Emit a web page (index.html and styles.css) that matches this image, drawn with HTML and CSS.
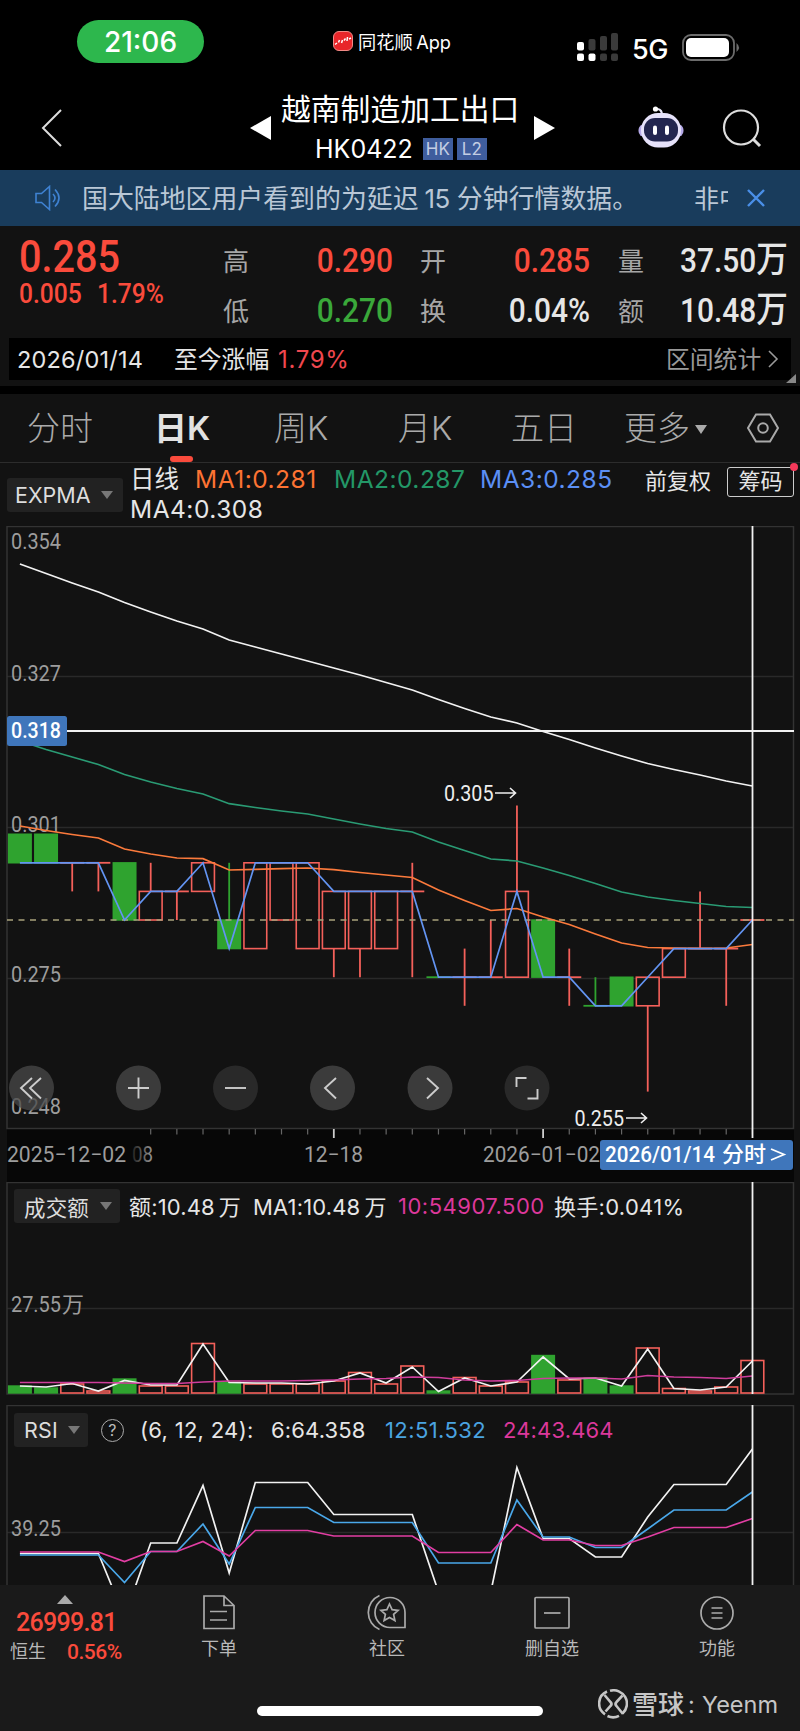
FILE: index.html
```html
<!DOCTYPE html>
<html lang="zh-CN">
<head>
    <meta charset="UTF-8">
    <meta name="viewport" content="width=device-width, initial-scale=1.0">
    <title>越南制造加工出口 HK0422</title>
    <link rel="stylesheet" href="styles.css">
</head>
<body>
    <div class="status-bar">
        <div class="time">21:06</div>
        <div class="app-tag">
            <svg width="20" height="20" viewBox="0 0 20 20">
                <rect x="0.5" y="0.5" width="19" height="19" rx="5.5" fill="#e8262a" stroke="#f08a86"/>
                <path d="M2 13.500l2-1.500M5.500 11.500l1-2.500M8.500 12l1-3M11 9.500l1.500-2M14 10l.5-4M16 8l2-1" stroke="#fff" stroke-width="1.500"/>
            </svg>
            <span class="app-name">同花顺 App</span>
        </div>
        <svg class="signal" width="42" height="30" viewBox="0 0 42 30">
            <g fill="#3a3a3a">
                <rect x="11.5" y="6" width="7" height="11.5" rx="2"/>
                <rect x="23" y="3" width="7" height="14.5" rx="2"/>
                <rect x="34" y="0" width="7" height="17.5" rx="2"/>
                <rect x="23" y="20.5" width="7" height="7.5" rx="2"/>
                <rect x="34" y="20.5" width="7" height="7.5" rx="2"/>
            </g>
            <rect x="0" y="9" width="7" height="8.5" rx="2" fill="#fff"/>
            <rect x="0" y="20.5" width="7" height="7.5" rx="2" fill="#fff"/>
            <rect x="11.5" y="20.5" width="7" height="7.5" rx="2" fill="#fff"/>
        </svg>
        <span class="network">5G</span>
        <svg class="battery" width="60" height="28" viewBox="0 0 60 28">
            <rect x="1" y="1" width="51" height="25" rx="8" fill="none" stroke="#6c6c6c" stroke-width="1.8"/>
            <rect x="4" y="4" width="43" height="19" rx="5" fill="#fff"/>
            <path d="M54.500 9q5 4.500 0 9z" fill="#6c6c6c"/>
        </svg>
    </div>

    <div class="header">
        <svg class="back" width="24" height="40" viewBox="0 0 24 40"><path d="M21 2L3 20l18 18" fill="none" stroke="#ddd" stroke-width="2"/></svg>
        <svg class="prev" width="22" height="24" viewBox="0 0 22 24"><path d="M0 12L21 0v24z" fill="#fff"/></svg>
        <div class="stock">
            <div class="stock-name">越南制造加工出口</div>
            <div class="stock-code">HK0422 <span class="badge">HK</span><span class="badge">L2</span></div>
        </div>
        <svg class="next" width="22" height="24" viewBox="0 0 22 24"><path d="M22 12L1 0v24z" fill="#fff"/></svg>
        <svg class="robot" width="46" height="42" viewBox="0 0 46 42">
            <path d="M24 9q0-5-4-6" fill="none" stroke="#e8e6f8" stroke-width="2.2"/>
            <circle cx="17.5" cy="3" r="2.6" fill="#fff"/>
            <rect x="0.5" y="18" width="45" height="13" rx="6" fill="#b5a9e8"/>
            <rect x="3" y="7" width="40" height="34.5" rx="17" fill="#e6e2fa"/>
            <rect x="6" y="12" width="34" height="23.5" rx="11" fill="#23264f"/>
            <rect x="15" y="19.5" width="4" height="9.5" rx="2" fill="#fff"/>
            <rect x="27" y="19.5" width="4" height="9.5" rx="2" fill="#fff"/>
        </svg>
        <svg class="search" width="42" height="40" viewBox="0 0 42 40"><circle cx="19" cy="18.5" r="17" fill="none" stroke="#ddd" stroke-width="2.2"/><path d="M31 30l7 7" stroke="#ddd" stroke-width="3"/></svg>
    </div>

    <div class="notice">
        <svg class="speaker" width="30" height="26" viewBox="0 0 30 26" fill="none" stroke="#3f82d2" stroke-width="1.6">
            <path d="M1 8.500v9h5.500l8 7v-23l-8 7z"/><path d="M18 9q4 4 0 8M20 4.500q8 8.500 0 17"/>
        </svg>
        <span class="notice-text">国大陆地区用户看到的为延迟<i>15</i>分钟行情数据。</span>
        <span class="notice-next">非中</span>
        <svg class="close" width="20" height="20" viewBox="0 0 20 20"><path d="M2 2l16 16M18 2L2 18" stroke="#4a8fe8" stroke-width="2.4"/></svg>
    </div>

    <div class="quote">
        <div class="price">
            <div class="last num">0.285</div>
            <div class="change"><span class="num">0.005</span><span class="num">1.79%</span></div>
        </div>
        <div class="quote-grid">
            <span>高</span><b class="num red">0.290</b>
            <span>开</span><b class="num red">0.285</b>
            <span>量</span><b class="num">37.50<em>万</em></b>
            <span>低</span><b class="num green">0.270</b>
            <span>换</span><b class="num">0.04%</b>
            <span>额</span><b class="num">10.48<em>万</em></b>
        </div>
    </div>

    <div class="range-bar">
        <span class="range-date">2026/01/14</span>
        <span class="range-label">至今涨幅</span>
        <span class="range-pct">1.79%</span>
        <span class="range-stat">区间统计</span>
        <svg width="12" height="20" viewBox="0 0 12 20"><path d="M2 2l8 8-8 8" fill="none" stroke="#999" stroke-width="1.6"/></svg>
    </div>
    <div class="corner"><svg width="10" height="9" viewBox="0 0 10 9"><path d="M10 0v9H0z" fill="#888"/></svg></div>

    <div class="tabs">
        <span class="tab">分时</span>
        <span class="tab active">日K</span>
        <span class="tab">周K</span>
        <span class="tab">月K</span>
        <span class="tab">五日</span>
        <span class="tab">更多<i class="caret"></i></span>
        <svg class="settings" width="34" height="30" viewBox="0 0 34 30" fill="none" stroke="#aaa" stroke-width="2"><path d="M10 1.500h14L32 15l-8 13.500H10L2 15z"/><circle cx="17" cy="15" r="4.8"/></svg>
    </div>

    <div class="indicators">
        <div class="dropdown">EXPMA<i class="caret"></i></div>
        <div class="ma-list">
            <span class="ma0">日线</span>
            <span class="ma1">MA1:0.281</span>
            <span class="ma2">MA2:0.287</span>
            <span class="ma3">MA3:0.285</span>
            <span class="ma4">MA4:0.308</span>
        </div>
        <span class="adjust">前复权</span>
        <span class="chips">筹码</span>
    </div>

    <svg class="chart" id="kline" width="800" height="656" viewBox="0 526 800 656">
        <defs>
            <linearGradient id="fade"><stop offset="0" stop-color="#222"/><stop offset="1" stop-color="#999"/></linearGradient>
        </defs>
        <rect x="7" y="1129" width="787" height="53" fill="#070707"/>
        <path class="grid" d="M7 676.500h787M7 827.500h787M7 978.500h787"/>
        <path class="frame" d="M7 1128.500V526.500h786.500v602z"/>
        <g id="ticks"></g>
        <g class="axis">
            <text x="11" y="548.5" textLength="50" lengthAdjust="spacingAndGlyphs">0.354</text>
            <text x="11" y="680.5" textLength="50" lengthAdjust="spacingAndGlyphs">0.327</text>
            <text x="11" y="831.5" textLength="50" lengthAdjust="spacingAndGlyphs">0.301</text>
            <text x="11" y="981.5" textLength="50" lengthAdjust="spacingAndGlyphs">0.275</text>
            <text x="11" y="1113.5" textLength="50" lengthAdjust="spacingAndGlyphs">0.248</text>
            <text x="7" y="1162" textLength="119" lengthAdjust="spacingAndGlyphs">2025−12−02</text>
            <text x="132" y="1162" textLength="21" lengthAdjust="spacingAndGlyphs" fill="url(#fade)">08</text>
            <text x="304" y="1162" textLength="59" lengthAdjust="spacingAndGlyphs">12−18</text>
            <text x="483" y="1162" textLength="117" lengthAdjust="spacingAndGlyphs">2026−01−02</text>
        </g>
        <g id="candles"></g>
        <path d="M7 920H794" stroke="#a9a37c" stroke-width="1.4" stroke-dasharray="6 5.500"/>
        <g id="lines"></g>
        <g class="mark">
            <text x="444" y="801" textLength="49.5" lengthAdjust="spacingAndGlyphs">0.305</text>
            <path d="M495 793h20M510 788l5.500 5-5.500 5"/>
            <text x="574.5" y="1126" textLength="49.5" lengthAdjust="spacingAndGlyphs">0.255</text>
            <path d="M626 1118h20M641 1113l5.500 5-5.500 5"/>
        </g>
        <path d="M7 731H794" stroke="#f2f2f2" stroke-width="2"/>
        <path d="M752.500 526V1138" stroke="#f2f2f2" stroke-width="1.8"/>
        <rect x="7" y="716" width="60" height="30" rx="2.5" fill="#3f76bb"/>
        <text class="tip" x="11" y="738" textLength="50" lengthAdjust="spacingAndGlyphs">0.318</text>
        <rect x="600" y="1140" width="193" height="30" rx="3" fill="#3f76bb"/>
        <text class="tip" x="605" y="1162" textLength="110" lengthAdjust="spacingAndGlyphs">2026/01/14</text>
        <text class="tip" x="722" y="1162" textLength="44" lengthAdjust="spacingAndGlyphs">分时</text>
        <path d="M771 1149l13 5.500-13 5.500" fill="none" stroke="#fff" stroke-width="1.8"/>
        <g class="tools">
            <circle cx="31.5" cy="1088" r="22.5"/><path d="M32 1078l-11 10 11 10.500M41 1078l-11 10 11 10.500"/>
            <circle cx="138.5" cy="1088" r="22.5"/><path d="M128 1088h21M138.500 1077.500v21"/>
            <circle cx="235.5" cy="1088" r="22.5" class="dim"/><path d="M225 1088h21"/>
            <circle cx="332.5" cy="1088" r="22.5"/><path d="M336 1078l-11 10 11 10.500"/>
            <circle cx="430" cy="1088" r="22.5"/><path d="M427 1078l11 10-11 10.500"/>
            <circle cx="527" cy="1088" r="22.5" class="dim"/><path d="M516.500 1087v-9h10M537.500 1089v9.500h-10"/>
        </g>
    </svg>

    <div class="panel volume">
        <svg class="chart" id="volume" width="800" height="223" viewBox="0 1182 800 223">
            <path class="grid" d="M7 1308.500h787"/>
            <path class="frame" d="M7 1182.500h786.500v211.500H7z"/>
            <text class="label" x="11" y="1311.5" textLength="50" lengthAdjust="spacingAndGlyphs">27.55</text>
            <text class="label" x="62" y="1312">万</text>
            <g id="bars"></g>
            <path d="M752.500 1182V1394" stroke="#f2f2f2" stroke-width="1.8"/>
        </svg>
        <div class="panel-head">
            <div class="dropdown">成交额<i class="caret"></i></div>
            <span class="v1">额:10.48<u></u>万</span>
            <span class="v2">MA1:10.48<u></u>万</span>
            <span class="v3 pink">10:54907.500</span>
            <span class="v4">换手:0.041%</span>
        </div>
    </div>

    <div class="panel rsi">
        <svg class="chart" id="rsi" width="800" height="180" viewBox="0 1405 800 180">
            <path class="grid" d="M7 1532.500h787"/>
            <path class="frame" d="M7 1590V1405.500h786.500V1590"/>
            <text class="label" x="11" y="1535.5" textLength="50" lengthAdjust="spacingAndGlyphs">39.25</text>
            <g id="rsi-lines"></g>
            <path d="M752.500 1405V1585" stroke="#f2f2f2" stroke-width="1.8"/>
        </svg>
        <div class="panel-head">
            <div class="dropdown">RSI<i class="caret"></i></div>
            <span class="help">?</span>
            <span class="r1">(6, 12, 24):</span>
            <span class="r2">6:64.358</span>
            <span class="r3 sky">12:51.532</span>
            <span class="r4 pink">24:43.464</span>
        </div>
    </div>

    <div class="footer">
        <div class="index">
            <i class="up"></i>
            <div class="index-value">26999.81</div>
            <div class="index-row"><span>恒生</span><b>0.56%</b></div>
        </div>
        <div class="nav nav-order">
            <svg width="40" height="38" viewBox="0 0 40 38"><path d="M5 3h20L35 12.500V35.500H5zM25 3v9.500H35M11 18.500h17M11 27h17"/></svg>
            <span>下单</span>
        </div>
        <div class="nav nav-community">
            <svg width="40" height="38" viewBox="0 0 40 38"><path d="M23 4.500A15 15 0 1 0 23 34.500H38V19.500A15 15 0 0 0 23 4.500zM12.500 2.500A18.500 18.500 0 0 0 12.500 36.500"/><path d="M22.500 11l2.600 5.600 6 .7-4.500 4.100 1.300 6.100-5.400-3.100-5.400 3.100 1.300-6.100-4.500-4.100 6-.7z"/></svg>
            <span>社区</span>
        </div>
        <div class="nav nav-remove">
            <svg width="40" height="38" viewBox="0 0 40 38"><rect x="3" y="4.5" width="34" height="30.5" rx="1"/><path d="M12 20h16.500"/></svg>
            <span>删自选</span>
        </div>
        <div class="nav nav-more">
            <svg width="40" height="38" viewBox="0 0 40 38"><circle cx="20" cy="20" r="16"/><path d="M14.500 15h11M14.500 20h11M14.500 25h11"/></svg>
            <span>功能</span>
        </div>
    </div>
    <div class="bottom">
        <div class="home-line"></div>
        <div class="watermark">
            <svg width="30" height="30" viewBox="0 0 30 30" fill="none" stroke="#c6c6c6" stroke-width="2.6"><path d="M9 2.500A13 13 0 0 0 7 25.300M12 1.800A13.300 13.300 0 0 1 24.500 24.500M21 26.900A13.300 13.300 0 0 1 9.500 27"/><path d="M6.500 6l6 7q2 2 0 4l-5 5.500M24.500 6.500l-6 6.500q-2 2 0 4l6.500 8"/></svg>
            <b>雪球</b><span class="colon">:</span><span>Yeenm</span>
        </div>
    </div>

    <script src="script.js"></script>
</body>
</html>
```

FILE: styles.css
```css
* {
    box-sizing: border-box;
}

body {
    margin: 0;
    width: 800px;
    background: #121212;
    color: #e6e6e6;
    font-family: Inter, 'Noto Sans CJK SC', sans-serif;
    white-space: nowrap;
    overflow-x: hidden;
}

svg {
    display: block;
    flex: none;
}

i, em {
    font-style: normal;
}

.num {
    font-family: Roboto, 'Noto Sans CJK SC', sans-serif;
    font-weight: 500;
    display: inline-block;
    transform: scaleX(0.88);
    transform-origin: left;
}

.red { color: #fa4b3c; }
.green { color: #3aa83a; }
.pink { color: #dc389b; }
.sky { color: #4aa3e0; }

.caret {
    display: inline-block;
    border: 6px solid transparent;
    border-top: 8px solid #777;
    border-bottom: 0;
}

/* status bar */
.status-bar {
    display: flex;
    height: 85px;
    background: #000;
    color: #fff;
}

.time {
    margin: 20px 0 0 77px;
    width: 127px;
    height: 43px;
    border-radius: 22px;
    background: #2db74d;
    font-size: 28px;
    font-weight: 500;
    line-height: 45px;
    text-align: center;
}

.app-tag {
    display: flex;
    align-items: center;
    gap: 5px;
    margin: 30px 0 0 129px;
    width: 120px;
    height: 22px;
}

.app-name {
    font-size: 18.2px;
    word-spacing: -1.5px;
}

.signal {
    margin: 33px 0 0 124px;
}

.network {
    margin: 33px 0 0 13px;
    width: 37px;
    font-size: 27px;
    font-weight: 500;
    letter-spacing: -0.5px;
    line-height: 34px;
}

.battery {
    margin: 34px 0 0 13px;
}

/* title */
.header {
    display: flex;
    height: 85px;
    background: #000;
    color: #fff;
}

.back {
    margin: 23px 0 0 40px;
}

.prev {
    margin: 31px 0 0 186px;
}

.stock {
    width: 261px;
}

.stock-name {
    margin: 3px 0 0 9px;
    font-size: 29.8px;
    line-height: 42px;
}

.stock-code {
    display: flex;
    align-items: center;
    height: 32px;
    margin: 3px 0 0 43px;
    font-size: 25px;
}

.badge {
    width: 30px;
    height: 22px;
    margin-left: 4px;
    background: #3f5d9d;
    color: #c3cde3;
    font-size: 17px;
    line-height: 22px;
    text-align: center;
}

.badge:first-of-type {
    margin-left: 10px;
}

.next {
    margin-top: 31px;
}

.robot {
    margin: 21px 0 0 83px;
}

.search {
    margin: 24px 0 0 38px;
}

/* notice */
.notice {
    display: flex;
    align-items: center;
    height: 56px;
    background: #193c5c;
    color: #b9c7d6;
}

.speaker {
    margin-left: 35px;
}

.notice-text {
    width: 608px;
    margin: -3px 0 0 17px;
    font-size: 25.9px;
}

.notice-text i {
    margin: 0 7px 0 6px;
    letter-spacing: -0.5px;
}

.notice-next {
    width: 34px;
    margin: -3px 0 0 4px;
    overflow: hidden;
    font-size: 25px;
}

.close {
    margin-left: 18px;
}

/* quote */
.quote {
    display: flex;
    height: 112px;
}

.price {
    width: 223px;
    padding: 4px 0 0 19px;
    color: #fa4b3c;
}

.last {
    font-size: 45px;
    line-height: 53px;
}

.change {
    display: flex;
    font-size: 27px;
    line-height: 22px;
}

.change .num {
    width: 78px;
    transform: scaleX(0.91);
}

.quote-grid {
    display: grid;
    grid-template-columns: 26px 144px 53px 144px 54px 144px;
    grid-template-rows: 50px 50px;
    padding-top: 10px;
    line-height: 51px;
}

.quote-grid span {
    color: #a6a6a6;
    font-size: 26px;
    text-align: right;
}

.quote-grid .num {
    font-size: 34px;
    line-height: 48px;
    text-align: right;
    transform-origin: right;
}

.quote-grid em {
    font-size: 36px;
    line-height: 1;
}

/* range bar */
.range-bar {
    display: flex;
    align-items: center;
    width: 782px;
    height: 42px;
    margin-left: 9px;
    padding-left: 8px;
    background: #000;
    font-size: 23.5px;
}

.range-date { width: 157px; letter-spacing: 0.2px; }
.range-label { width: 104px; margin-top: -3px; font-size: 23.8px; }
.range-pct { width: 388px; color: #f0474f; font-size: 24px; letter-spacing: 0.7px; }
.range-stat { width: 101px; margin-top: -3px; color: #999; font-size: 23.8px; }

.corner {
    display: flex;
    justify-content: flex-end;
    height: 12px;
    margin-top: -6px;
    padding-right: 4px;
}

/* tabs */
.tabs {
    display: flex;
    height: 77px;
    padding-left: 27px;
    border-top: 8px solid #000;
    border-bottom: 1px solid #2c2c2c;
    color: #aaa;
    font-size: 33px;
    line-height: 68px;
}

.tab { width: 127px; font-weight: 300; }
.tab:nth-child(2) { width: 120px; }
.tab:nth-child(3) { width: 124px; }
.tab:nth-child(4) { width: 113px; }
.tab:nth-child(5) { width: 113px; }
.tab:nth-child(6) { width: 122px; }

.tab.active {
    color: #e2e2e2;
    font-weight: 600;
}

.tab.active::after {
    content: "";
    display: block;
    width: 23px;
    height: 6px;
    margin: -6px 0 0 16px;
    border-radius: 3px;
    background: #fa4b3c;
}

.tab .caret {
    margin: 0 0 6px 5px;
    border-top: 9px solid #aaa;
}

.settings {
    margin-top: 19px;
}

/* indicator row */
.indicators {
    display: flex;
    height: 63px;
}

.dropdown {
    display: flex;
    align-items: center;
    justify-content: space-between;
    height: 34px;
    padding: 0 8px 0 10px;
    border-radius: 3px;
    background: #222;
    color: #ddd;
    font-size: 21.5px;
}

.indicators .dropdown {
    width: 116px;
    margin: 15px 0 0 7px;
    padding: 0 10px 0 8px;
}

.ma-list {
    display: flex;
    flex-wrap: wrap;
    width: 515px;
    height: 60px;
    padding-left: 7px;
    font-size: 24.5px;
    line-height: 29px;
    letter-spacing: 0.5px;
}

.ma-list span { height: 29px; margin-top: 1.5px; }
.ma0 { width: 65px; letter-spacing: 0; }
.ma1 { width: 139px; color: #fd7333; }
.ma2 { width: 146px; color: #239767; }
.ma3 { width: 140px; color: #5b8ff5; }
.ma4 { width: 200px; }

.adjust {
    width: 89px;
    padding-left: 7px;
    margin-top: 3px;
    font-size: 22px;
    line-height: 30px;
}

.chips {
    position: relative;
    width: 67px;
    height: 30px;
    margin-top: 4px;
    border: 1.5px solid #ccc;
    border-radius: 3px;
    font-size: 22px;
    line-height: 26px;
    text-align: center;
}

.chips::after {
    content: "";
    position: absolute;
    top: -5px;
    right: -5px;
    width: 8px;
    height: 8px;
    border-radius: 50%;
    background: #f5395a;
}

/* charts */
.chart {
    font-family: Roboto, 'Noto Sans CJK SC', sans-serif;
    font-size: 22px;
}

.chart path { fill: none; }
.grid { stroke: #292929; stroke-width: 1.5; }
.frame { stroke: #333; stroke-width: 1.5; }
.axis, .label { fill: #9d9d9d; }
.mark { fill: #eee; stroke: none; }
.mark path { stroke: #eee; stroke-width: 1.6; }
.tip { fill: #fff; font-weight: 500; }
.tools circle { fill: #4a4a4a; fill-opacity: 0.75; }
.tools circle.dim { fill: #323232; }
.tools path { stroke: #ccc; stroke-width: 1.9; }

.up-body { fill: none; stroke: #f4605a; stroke-width: 1.6; }
.down-body { fill: #2fa32f; }
.up-wick { stroke: #f4605a; stroke-width: 1.8; }
.down-wick { stroke: #2fa32f; stroke-width: 1.8; }

.panel {
    display: grid;
}

.panel > * {
    grid-area: 1 / 1;
}

.panel-head {
    display: flex;
    align-items: center;
    height: 34px;
    margin: 7px 0 0 14px;
    font-size: 22px;
    letter-spacing: 0.15px;
}

.rsi .panel-head { margin-top: 8px; }
.panel-head u { display: inline-block; width: 4px; }
.volume .dropdown { width: 106px; }
.rsi .dropdown { width: 74px; }
.v1, .v2, .v4 { margin-top: -2px; }
.v1 { width: 124px; margin-left: 9px; }
.v2 { width: 145px; }
.v3 { width: 156px; letter-spacing: 0.5px; }
.v4 { letter-spacing: 0.3px; }

.help {
    width: 23px;
    height: 23px;
    margin: 0 16px 0 13px;
    border: 1.6px solid #aaa;
    border-radius: 50%;
    color: #bbb;
    font-size: 16px;
    line-height: 20px;
    text-align: center;
}

.r1 { width: 131px; letter-spacing: 0.3px; }
.r2 { width: 114px; }
.r3 { width: 118px; letter-spacing: 0.4px; }

/* footer */
.footer {
    display: flex;
    height: 85px;
    background: #1a1a1a;
    color: #b8b8b8;
    font-size: 18px;
}

.index {
    width: 130px;
    padding: 10px 0 0 10px;
    color: #fa4b3c;
    font-family: Roboto, 'Noto Sans CJK SC', sans-serif;
}

.up {
    display: block;
    width: 0;
    margin-left: 47px;
    border: 8px solid transparent;
    border-top: 0;
    border-bottom: 9px solid #aaa;
}

.index-value {
    padding-left: 6px;
    margin-top: 4px;
    font-size: 25px;
    font-weight: 500;
    line-height: 30px;
    letter-spacing: -0.7px;
}

.index-row {
    display: flex;
    line-height: 28px;
}

.index-row span {
    width: 57px;
    color: #b8b8b8;
}

.index-row b {
    font-size: 21px;
    font-weight: 500;
    letter-spacing: -0.5px;
}

.nav {
    display: flex;
    flex-direction: column;
    align-items: center;
    width: 80px;
    padding-top: 8px;
}

.nav svg {
    fill: none;
    stroke: #aaa;
    stroke-width: 1.7;
}

.nav span {
    margin-top: 5px;
    line-height: 26px;
}

.nav-order { margin-left: 49px; }
.nav-community { margin-left: 88px; }
.nav-remove { margin-left: 85px; }
.nav-more { margin-left: 85px; }

.bottom {
    display: flex;
    height: 61px;
    background: #1a1a1a;
}

.home-line {
    width: 286px;
    height: 10px;
    margin: 36px 0 0 257px;
    border-radius: 5px;
    background: #fff;
}

.watermark {
    display: flex;
    align-items: center;
    height: 34px;
    margin: 17px 0 0 55px;
    color: #c6c6c6;
    font-size: 23.5px;
}

.watermark b {
    width: 54px;
    margin: -3px 0 0 4px;
    font-size: 26px;
    font-weight: 500;
}

.watermark .colon {
    width: 16px;
    padding-left: 2px;
}
```

FILE: script.js
```js
const STEP = 26.16;
const X0 = 19.9;
const NS = "http://www.w3.org/2000/svg";

// open, close, high, low
const candles = [
    [300, 295, 300, 295], [300, 295, 300, 295], [295, 295, 295, 290], [295, 295, 295, 290],
    [295, 285, 295, 285], [285, 290, 295, 285], [290, 290, 290, 285], [290, 295, 295, 290],
    [285, 280, 295, 280], [280, 295, 295, 280], [285, 295, 295, 285], [280, 295, 295, 280],
    [280, 290, 290, 275], [280, 290, 290, 275], [280, 290, 290, 280], [290, 290, 295, 275],
    [275, 275, 275, 275], [275, 275, 280, 270], [275, 275, 285, 275], [275, 290, 305, 275],
    [285, 275, 285, 275], [275, 275, 280, 270], [270, 270, 275, 270], [275, 270, 275, 270],
    [270, 275, 275, 255], [275, 280, 280, 275], [280, 280, 290, 280], [280, 280, 280, 270],
    [285, 285, 285, 285]
];
const falling = [0, 1, 4, 8, 16, 20, 22, 23];

// vertical positions of the curves, one per day
const slow = [564, 573.5, 583, 592, 602.5, 612, 621, 629, 640, 647, 654, 661, 668, 675, 682.5, 690, 699.5, 708.5, 717, 723, 731.5, 739.5, 748, 756, 763.5, 769.5, 775, 781, 786];
const mid = [741, 749.5, 757, 764.5, 774.5, 782, 788.5, 794, 803.7, 807.5, 811, 814, 819, 824, 828.5, 832, 842, 850.5, 859, 861, 868, 875.5, 883.5, 892, 897, 900.5, 903.5, 906.5, 907.5];
const fast = [826, 830.5, 834.5, 838, 849, 854, 858, 858.7, 870, 869.3, 868.7, 868, 869.7, 872.5, 875, 877.5, 890, 900.5, 910.5, 908.5, 917, 924.5, 934, 943, 947.5, 948, 948.3, 948, 944.5];

const volTop = [1386, 1388, 1384, 1391, 1379, 1386, 1386, 1343.5, 1382, 1384, 1384, 1384, 1381, 1372.5, 1384, 1366, 1391, 1377.5, 1386, 1382, 1355.5, 1380, 1378, 1386, 1348, 1388.5, 1391, 1387, 1360.5];
const volLine = [1386, 1387, 1383.5, 1391, 1380.5, 1385, 1385, 1344, 1382.5, 1383, 1383, 1384, 1381, 1373, 1383, 1367, 1391.5, 1378, 1386, 1382, 1357, 1379, 1378, 1386, 1349, 1388.5, 1390, 1387, 1361];
const volAvg = [1382.5, 1382.5, 1382.5, 1382.5, 1383, 1383.5, 1383.5, 1382, 1381, 1381, 1381, 1380.5, 1380, 1379, 1378.5, 1377, 1377.5, 1380, 1381, 1380.5, 1378.5, 1378, 1378, 1379, 1375.5, 1377, 1377.5, 1378.5, 1376];

const rsi6 = [1553.5, 1553.5, 1553.5, 1553.5, 1617, 1543, 1543, 1485.5, 1573, 1482.5, 1482.5, 1482.5, 1514.5, 1514.5, 1514.5, 1514.5, 1592, 1592, 1592, 1467.5, 1538.5, 1538.5, 1557, 1557, 1517, 1484.5, 1484.5, 1484.5, 1449];
const rsi12 = [1555, 1555, 1555, 1555, 1582.5, 1551.5, 1551.5, 1524, 1564, 1507.5, 1507.5, 1507.5, 1522.5, 1522.5, 1522.5, 1522.5, 1563, 1563, 1563, 1500, 1537, 1537, 1547.5, 1547.5, 1529, 1510, 1510, 1510, 1492];
const rsi24 = [1552, 1552, 1552, 1552, 1561.5, 1551.5, 1551.5, 1541.5, 1556, 1530.5, 1530.5, 1530.5, 1536, 1536, 1536, 1536, 1552.5, 1552.5, 1552.5, 1524.5, 1540, 1540, 1545.5, 1545.5, 1537, 1527.5, 1527.5, 1527.5, 1518.5];

function x(i) {
    return X0 + STEP * i;
}

function y(price) {
    return 920 - (price - 285) * 5.72;
}

function add(parent, tag, attrs) {
    const el = document.createElementNS(NS, tag);
    for (const key in attrs) el.setAttribute(key, attrs[key]);
    document.getElementById(parent).appendChild(el);
}

function line(parent, ys, color) {
    const points = ys.map((v, i) => x(i).toFixed(1) + "," + v).join(" ");
    add(parent, "polyline", { points: points, fill: "none", stroke: color, "stroke-width": 1.7 });
}

function body(parent, i, top, bottom) {
    const left = Math.max(x(i) - 12, 7);
    if (falling.includes(i)) {
        add(parent, "rect", { class: "down-body", x: left, y: top - 0.7, width: x(i) + 12 - left, height: bottom - top + 1.4 });
    } else {
        add(parent, "rect", { class: "up-body", x: left + 0.6, y: top, width: 22.8, height: bottom - top });
    }
}

candles.forEach(([open, close, high, low], i) => {
    const kind = falling.includes(i) ? "down-wick" : "up-wick";
    const top = Math.max(open, close);
    const bottom = Math.min(open, close);
    if (high > top) add("candles", "line", { class: kind, x1: x(i), x2: x(i), y1: y(high), y2: y(top) });
    if (low < bottom) add("candles", "line", { class: kind, x1: x(i), x2: x(i), y1: y(bottom), y2: y(low) });
    if (open === close) {
        add("candles", "line", { class: kind, x1: x(i) - 12, x2: x(i) + 12, y1: y(open), y2: y(open) });
    } else {
        body("candles", i, y(top), y(bottom));
    }
    body("bars", i, volTop[i], 1393);
    if (i > 4) {
        const major = i === 12 || i === 20;
        add("ticks", "line", { x1: x(i), x2: x(i), y1: 1129, y2: major ? 1138 : 1134.5, stroke: major ? "#ccc" : "#666", "stroke-width": major ? 1.8 : 1.2 });
    }
});

line("lines", slow, "#f2f2f2");
line("lines", mid, "#2a9b74");
line("lines", fast, "#fb7a3c");
line("lines", candles.map(c => y(c[1])), "#6394f2");

line("bars", volLine, "#f2f2f2");
line("bars", volAvg, "#cf3d9c");

line("rsi-lines", rsi6, "#f2f2f2");
line("rsi-lines", rsi12, "#4aa8ea");
line("rsi-lines", rsi24, "#e23ea3");
```
